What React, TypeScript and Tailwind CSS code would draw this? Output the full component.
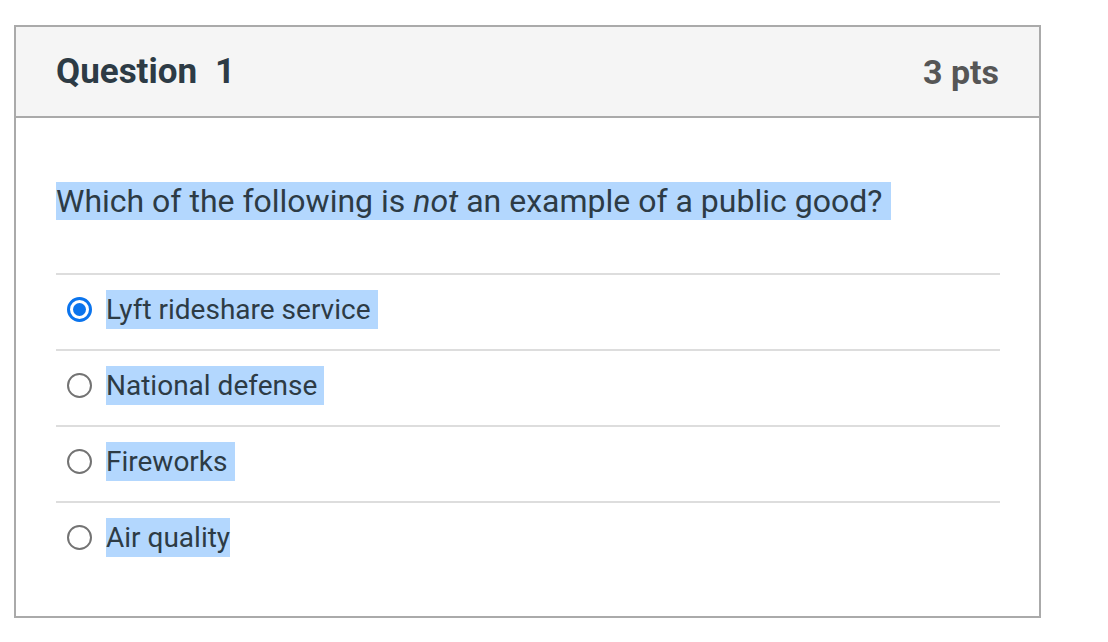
export default function App() {
  const options = [
    { label: 'Lyft rideshare service', checked: true, trail: true },
    { label: 'National defense', checked: false, trail: true },
    { label: 'Fireworks', checked: false, trail: true },
    { label: 'Air quality', checked: false, trail: false },
  ];

  return (
    <div className="min-h-screen bg-white pt-[25px] pl-[14px] font-['Roboto',sans-serif] text-[#2d3b45]">
      <div className="w-[1027px] h-[593px] border-2 border-[#aaaaaa] bg-white">
        {/* Header */}
        <div className="flex items-center justify-between h-[91px] px-[40px] bg-[#f5f5f5] border-b-2 border-[#aaaaaa]">
          <h2 className="flex gap-[18px] text-[35px] font-bold leading-none">
            <span>Question</span>
            <span>1</span>
          </h2>
          <span className="text-[34px] font-bold leading-none text-[#565656]">3 pts</span>
        </div>

        {/* Body */}
        <div className="px-[40px] pt-[59px]">
          <p className="text-[32px] leading-[48px]">
            <span className="bg-[#b3d7fe] pr-[9px]">
              Which of the following is <em>not</em> an example of a public good?
            </span>
          </p>

          <div className="mt-[48px] w-[944px]">
            {options.map((o) => (
              <div key={o.label} className="flex items-center h-[76px] pb-[6px] border-t-2 border-[#dddddd]">
                <span
                  className={
                    o.checked
                      ? 'ml-[11px] w-[25px] h-[25px] rounded-full border-[3px] border-[#0b74ed] flex items-center justify-center'
                      : 'ml-[11px] w-[25px] h-[25px] rounded-full border-2 border-[#737373]'
                  }
                >
                  {o.checked && <span className="w-[13px] h-[13px] rounded-full bg-[#0b74ed]" />}
                </span>
                <span
                  className={
                    o.trail
                      ? 'ml-[14px] pr-[7px] text-[28px] leading-[39px] bg-[#b3d7fe]'
                      : 'ml-[14px] text-[28px] leading-[39px] bg-[#b3d7fe]'
                  }
                >
                  {o.label}
                </span>
              </div>
            ))}
          </div>
        </div>
      </div>
    </div>
  );
}
